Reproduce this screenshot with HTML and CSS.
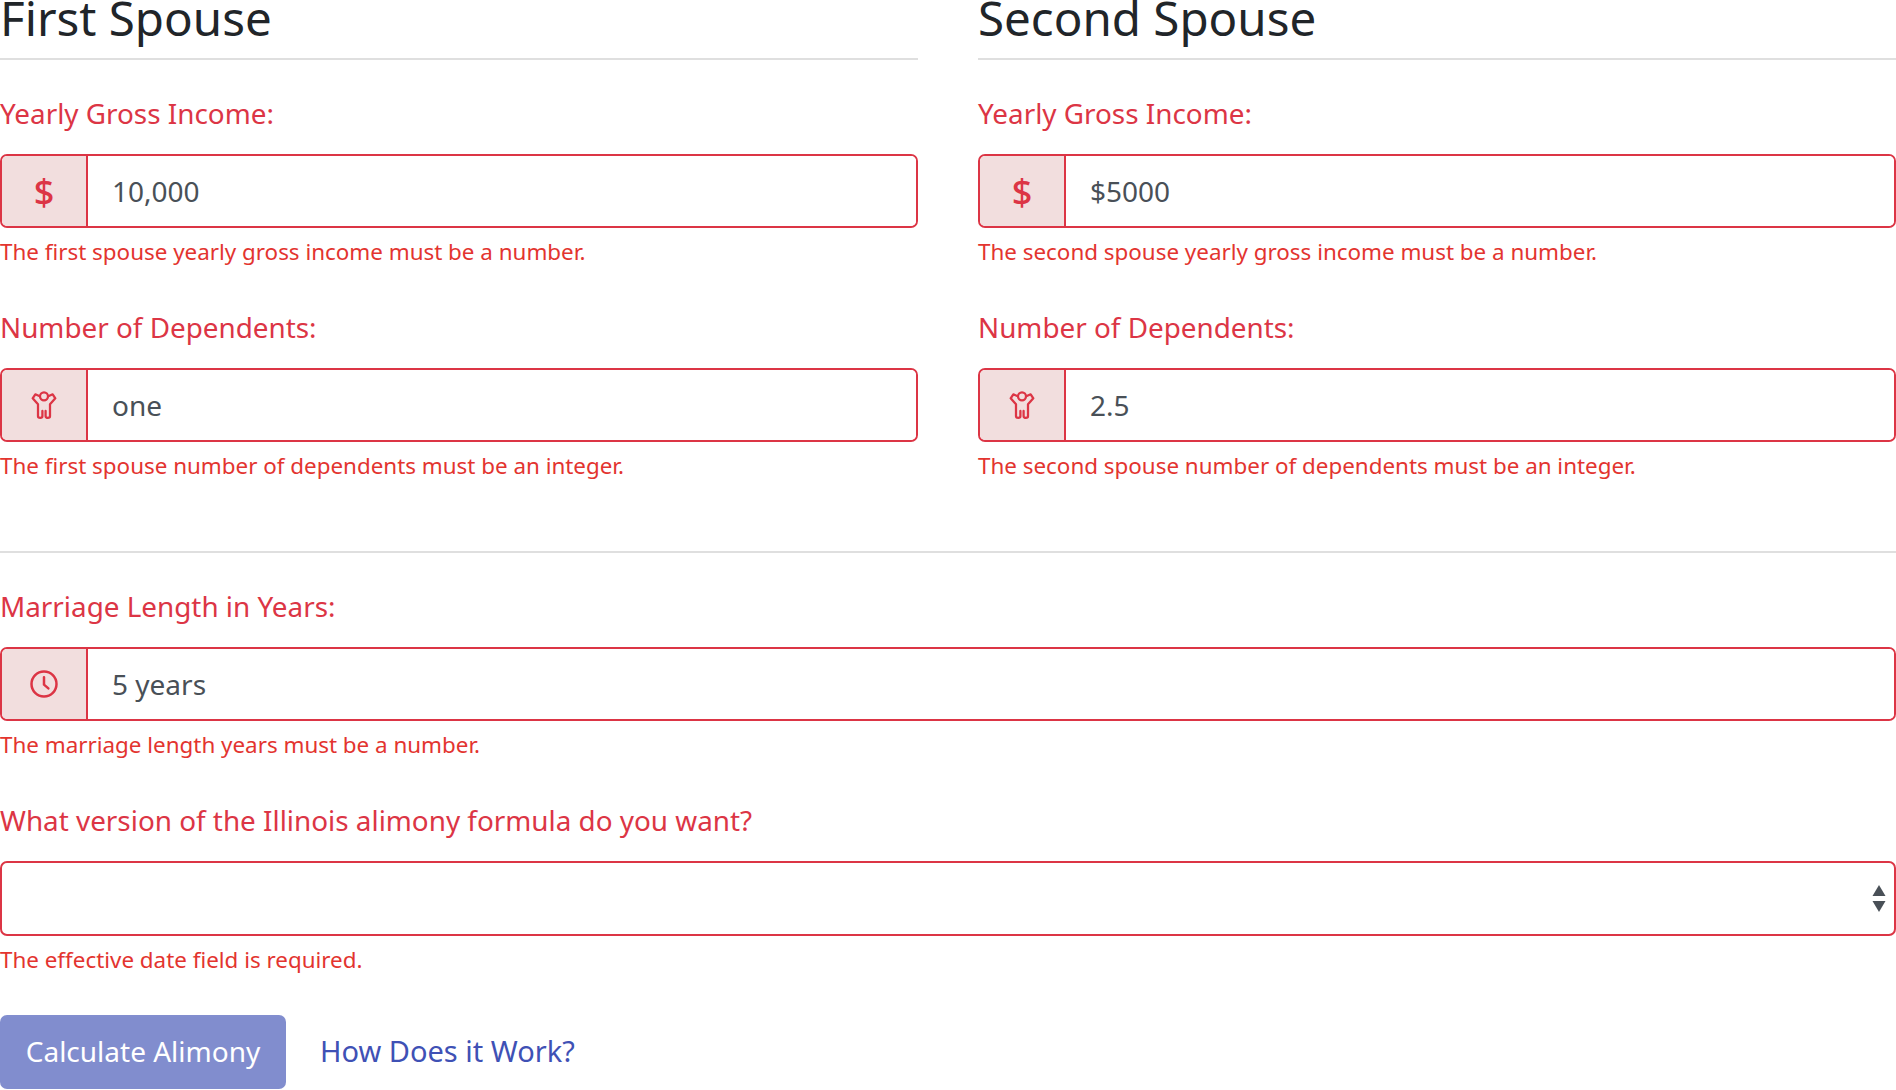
FILE: index.html
```html
<!DOCTYPE html>
<html>
  <head>
    <meta charset="utf-8" />
    <title>Illinois Alimony Calculator</title>
    <link rel="stylesheet" href="styles.css">
  </head>
  <body>
    <form id="calculator">
      <div class="spouses">
        <div class="spouse">
          <h2>First Spouse</h2>
          <hr>
          <div class="field">
            <label>Yearly Gross Income:</label>
            <div class="input-group">
              <span class="addon addon-dollar">$</span>
              <input type="text" value="10,000">
            </div>
            <p class="error">The first spouse yearly gross income must be a number.</p>
          </div>
          <div class="field">
            <label>Number of Dependents:</label>
            <div class="input-group">
              <span class="addon">
                <svg viewBox="0 0 24 24" width="32" height="32"><use href="#icon-child"></use></svg>
              </span>
              <input type="text" value="one">
            </div>
            <p class="error">The first spouse number of dependents must be an integer.</p>
          </div>
        </div>
        <div class="spouse">
          <h2>Second Spouse</h2>
          <hr>
          <div class="field">
            <label>Yearly Gross Income:</label>
            <div class="input-group">
              <span class="addon addon-dollar">$</span>
              <input type="text" value="$5000">
            </div>
            <p class="error">The second spouse yearly gross income must be a number.</p>
          </div>
          <div class="field">
            <label>Number of Dependents:</label>
            <div class="input-group">
              <span class="addon">
                <svg viewBox="0 0 24 24" width="32" height="32"><use href="#icon-child"></use></svg>
              </span>
              <input type="text" value="2.5">
            </div>
            <p class="error">The second spouse number of dependents must be an integer.</p>
          </div>
        </div>
      </div>

      <hr class="divider">

      <div class="field">
        <label>Marriage Length in Years:</label>
        <div class="input-group">
          <span class="addon">
            <svg viewBox="0 0 24 24" width="30" height="30" class="icon-line">
              <circle cx="12" cy="12" r="10"></circle>
              <path d="M12 6.5V12.5L15.5 15.5"></path>
            </svg>
          </span>
          <input type="text" value="5 years">
        </div>
        <p class="error">The marriage length years must be a number.</p>
      </div>

      <div class="field">
        <label>What version of the Illinois alimony formula do you want?</label>
        <div class="select-box">
          <svg viewBox="0 0 14 28" width="14" height="28" class="select-arrows">
            <path d="M7 0L13.500 11H0.500Z"></path>
            <path d="M0.500 16H13.500L7 27Z"></path>
          </svg>
        </div>
        <p class="error">The effective date field is required.</p>
      </div>

      <div class="actions">
        <button type="button" class="btn-calc" disabled>Calculate Alimony</button>
        <a href="#" class="how-link">How Does it Work?</a>
      </div>
    </form>

    <!-- shared child icon -->
    <svg width="0" height="0" class="icon-defs">
      <defs>
        <g id="icon-child" fill="none" stroke="currentColor" stroke-width="1.700" stroke-linecap="round" stroke-linejoin="round">
          <circle cx="12" cy="5.500" r="3"></circle>
          <path d="M8.800 5.500L5.500 4L3.500 7L7.500 11.500V20.500C7.500 22 10.800 22 10.800 20.500V16.500M15.200 5.500L18.500 4L20.500 7L16.500 11.500V20.500C16.500 22 13.200 22 13.200 20.500V16.500"></path>
        </g>
      </defs>
    </svg>
  </body>
</html>
```

FILE: styles.css
```css
/* Alimony calculator form */
html, body {
  height: 100%;
}
body {
  margin: 0;
  overflow: hidden;
  background-color: #fff;
  font-family: "Noto Sans", Arial, sans-serif;
  color: #212529;
}
.spouses {
  display: grid;
  grid-template-columns: 1fr 1fr;
  gap: 60px;
}
h2 {
  margin: 0;
  height: 58px;
  font-size: 47.500px;
  font-weight: 400;
  line-height: 36px;
}
hr {
  margin: 0 0 33px;
  height: 2px;
  border: none;
  background-color: #dfdfdf;
}
.divider {
  margin-top: 68px;
}
.field {
  margin-bottom: 38px;
}
.spouse .field:last-child {
  margin-bottom: 0;
}
label {
  display: block;
  height: 42px;
  margin-bottom: 19px;
  font-size: 27.850px;
  line-height: 40px;
  color: #dc3545;
}
.input-group {
  display: flex;
  height: 74px;
  box-sizing: border-box;
  border: 2px solid #dc3545;
  border-radius: 7px;
  overflow: hidden;
}
.addon {
  display: flex;
  flex: none;
  align-items: center;
  justify-content: center;
  width: 84px;
  border-right: 2px solid #dc3545;
  background-color: #f2dede;
  color: #dc3545;
}
.addon-dollar {
  font-size: 36px;
  font-weight: 500;
}
.icon-line {
  fill: none;
  stroke: currentColor;
  stroke-width: 2;
  stroke-linecap: round;
  stroke-linejoin: round;
}
.icon-defs {
  position: absolute;
}
.input-group input {
  flex: 1;
  min-width: 0;
  padding: 0 24px;
  border: none;
  outline: none;
  font-family: inherit;
  font-size: 28px;
  color: #495057;
}
.select-box {
  display: flex;
  align-items: center;
  justify-content: flex-end;
  height: 75px;
  box-sizing: border-box;
  padding-right: 8px;
  border: 2px solid #dc3545;
  border-radius: 7px;
}
.select-arrows {
  fill: #495057;
}
.error {
  margin: 6px 0 0;
  font-size: 22.400px;
  line-height: 35px;
  color: #e3342f;
}
.actions {
  display: flex;
  align-items: center;
  gap: 34px;
}
.btn-calc {
  width: 286px;
  height: 74px;
  padding: 0 0 3px;
  border: none;
  border-radius: 7px;
  background-color: #3f51b5;
  opacity: 0.65;
  font-family: inherit;
  font-size: 28px;
  color: #fff;
}
.how-link {
  margin-bottom: 3px;
  font-size: 29px;
  color: #3f51b5;
  text-decoration: none;
}
```
